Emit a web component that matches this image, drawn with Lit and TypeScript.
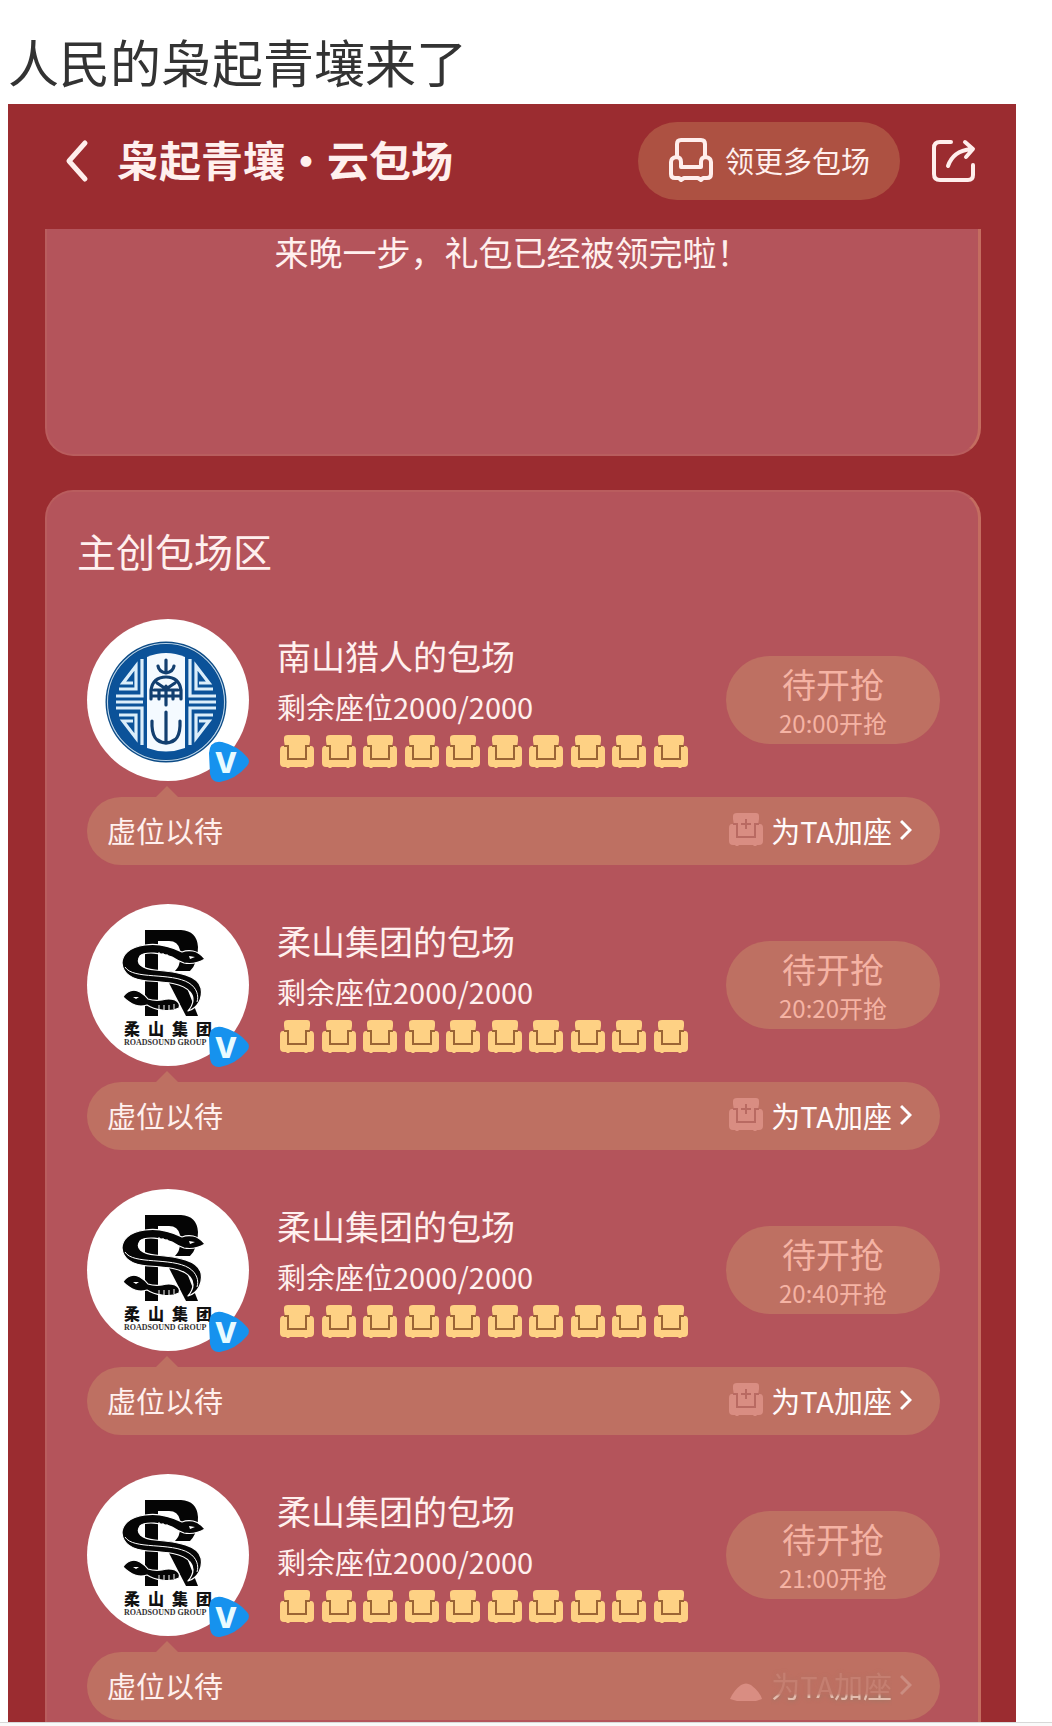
import { LitElement, html, css, svg, nothing } from "lit";
import { customElement, property } from "lit/decorators.js";
import { classMap } from "lit/directives/class-map.js";

interface Booking {
  name: string;
  logo: "nanshan" | "roushan";
  left: number;
  total: number;
  time: string;
  faded?: boolean;
}

const bookings: Booking[] = [
  { name: "南山猎人的包场", logo: "nanshan", left: 2000, total: 2000, time: "20:00" },
  { name: "柔山集团的包场", logo: "roushan", left: 2000, total: 2000, time: "20:20" },
  { name: "柔山集团的包场", logo: "roushan", left: 2000, total: 2000, time: "20:40" },
  { name: "柔山集团的包场", logo: "roushan", left: 2000, total: 2000, time: "21:00", faded: true },
];

const fret = svg`
  <path d="M29 77H55V40" />
  <path d="M32 70H49V47L36 64H46" />
`;

const nanshanLogo = svg`
  <circle cx="79" cy="83" r="60.500" fill="#0c4b86" />
  <circle cx="79" cy="83" r="58.500" fill="none" stroke="#b8d3ea" stroke-width="1.200" />
  <circle cx="79" cy="83" r="57.500" fill="#0b5299" />
  <path d="M60 38Q79 30 98 38V129Q79 136 60 129Z" fill="#f4faff" />
  <g fill="none" stroke="#dceefa" stroke-width="3.200">
    <g>${fret}</g>
    <g transform="translate(158 0) scale(-1 1)">${fret}</g>
    <g transform="translate(0 166) scale(1 -1)">${fret}</g>
    <g transform="translate(158 166) scale(-1 -1)">${fret}</g>
    <path d="M29 83H56M102 83H129" />
  </g>
  <g fill="none" stroke="#123f70" stroke-width="3.200" stroke-linecap="round" stroke-linejoin="round">
    <path d="M79 41V54M71 47Q72 53 79 54Q86 53 87 47" />
    <path d="M64 80V71Q66 58 79 58Q92 58 94 71V80M70 64L79 70L88 64M67 71H91M65 77H93M72 71V80M86 71V80M79 67V86" />
    <path d="M65 102Q64 124 79 124Q94 124 93 102M79 93V124M71 121Q79 127 87 121" />
  </g>
`;

const roushanLogo = svg`
  <path d="M58 26H94Q110 27 111 43Q111 59 103 67H88Q93 62 93 55V46Q91 37 82 37H71V112H58Z" fill="#050505" />
  <path d="M82 79H98L111 112H99Z" fill="#050505" />
  <g fill="#050505" stroke="#fff" stroke-width="1.200" stroke-linejoin="round">
    <path
      d="M36 93Q38 89 43 87Q48 85 53 88Q58 91 61 95Q67 97 75 96Q82 94 88 96Q94 99 92 104Q84 108 75 106Q66 105 60 101Q54 103 48 101Q42 99 36 93Z"
    />
    <path
      d="M118 55Q112 48 106 47Q100 46 95 48C85 43 71 39 58 41C41 43 35 52 35 59C36 71 48 76 61 77C78 78 96 79 103 88C108 94 106 101 101 107C111 104 116 94 114 84C111 71 91 68 68 66C55 65 48 59 53 52C58 47 75 49 85 53Q91 57 97 59Q108 61 118 55Z"
    />
  </g>
  <g fill="none" stroke="#fff" stroke-width="1">
    <path d="M38 63C46 76 84 68 102 79C110 84 112 92 110 98" />
    <path d="M72 48V51M76 49V53M80 50V54M72 101V107M77 101V107M82 101V107M87 100V105" />
  </g>
  <path d="M102 52L108 53L103 55ZM46 93L52 93L49 95Z" fill="#fff" />
  <text class="logo-cn" x="37 61 85 109" y="131">柔山集团</text>
  <text class="logo-en" x="37" y="141">ROADSOUND GROUP</text>
`;

const sofaShape = svg`
  <path d="M8 0H27Q30 0 30 3V6L29 12H25V23H9V12H5L4 6V3Q4 0 8 0Z" />
  <path d="M3 11H5Q8 11 8 14V24H26V14Q26 11 29 11H31Q34 11 34 15V28Q34 32 30 32H28L27 33H25L24 32H10L9 33H7L6 32H4Q0 32 0 28V15Q0 11 3 11Z" />
`;

@customElement("booking-row")
export class BookingRow extends LitElement {
  @property({ attribute: false }) booking!: Booking;

  static styles = css`
    :host {
      display: block;
      color: #fff0ee;
    }
    .top {
      display: flex;
      align-items: center;
    }
    .avatar {
      flex: none;
      width: 162px;
      height: 162px;
      overflow: visible;
    }
    .logo-cn {
      font: 900 16px "Noto Sans CJK SC", sans-serif;
      fill: #111;
    }
    .logo-en {
      font: bold 8px "Liberation Serif", serif;
      fill: #333;
    }
    .badge-v {
      font: 800 29px Inter, sans-serif;
      fill: #e8fbff;
      text-anchor: middle;
    }
    .info {
      flex: 1;
      margin-left: 28px;
    }
    .name {
      margin: 0;
      font-size: 34px;
      line-height: 50px;
      font-weight: 400;
    }
    .left {
      margin: 0;
      font-size: 29px;
      line-height: 50px;
    }
    .seats {
      display: flex;
      justify-content: space-between;
      width: 408px;
      margin: 4px 0 0 3px;
    }
    .sofa {
      display: block;
      flex: none;
      width: 34px;
      height: 34px;
      fill: #fed184;
    }
    .line {
      fill: none;
      stroke: #9b6535;
      stroke-width: 2;
    }
    button {
      font-family: inherit;
      color: inherit;
      border: 0;
      margin: 0;
      padding: 0;
      background: none;
    }
    .status {
      flex: none;
      display: flex;
      flex-direction: column;
      align-items: center;
      justify-content: center;
      box-sizing: border-box;
      width: 214px;
      height: 88px;
      padding-top: 4px;
      border-radius: 44px;
      background: #be7062;
      color: #f5b3a4;
    }
    .state {
      font-size: 34px;
      line-height: 42px;
    }
    .time {
      font-size: 24px;
      line-height: 36px;
    }
    .bubble {
      position: relative;
      box-sizing: border-box;
      display: flex;
      align-items: center;
      justify-content: space-between;
      height: 68px;
      margin-top: 16px;
      padding: 0 28px 2px 20px;
      border-radius: 34px;
      background: #be7062;
      font-size: 29px;
    }
    .bubble::before {
      content: "";
      position: absolute;
      left: 69px;
      bottom: 100%;
      border: 11px solid transparent;
      border-top: 0;
      border-bottom-color: #be7062;
    }
    .add {
      display: flex;
      align-items: center;
      gap: 8px;
      font-size: 29px;
      line-height: 44px;
      color: #fffafa;
    }
    .add .sofa {
      fill: #d98d82;
    }
    .add .line {
      stroke: #b96a62;
    }
    .chevron {
      width: 12px;
      height: 22px;
      fill: none;
      stroke: #fff;
      stroke-width: 3;
    }
    .faded .label {
      -webkit-mask-image: linear-gradient(rgba(0, 0, 0, 0.2) 70%, #000 76%);
      mask-image: linear-gradient(rgba(0, 0, 0, 0.2) 70%, #000 76%);
      color: #e3bcae;
      text-shadow: 0 0 5px #8f7a68;
    }
    .faded .chevron {
      opacity: 0.2;
    }
  `;

  private sofa(plus = false) {
    return html`<svg class="sofa" viewBox="0 0 34 34" aria-hidden="true">
      ${sofaShape}
      <path class="line" d="M4 11H8V24H26V11H30" />
      ${plus ? svg`<path class="line" d="M17 6V16M12 11H22" />` : nothing}
    </svg>`;
  }

  private smudgedSofa() {
    return html`<svg class="sofa" viewBox="0 0 34 34" aria-hidden="true">
      <path d="M1 31Q5 22 12 17Q17 14 22 17Q31 24 33 31L27 33H8Z" />
    </svg>`;
  }

  render() {
    const b = this.booking;
    return html`
      <div class="top">
        <svg class="avatar" viewBox="0 0 162 162" role="img" aria-label=${b.name}>
          <circle cx="81" cy="81" r="81" fill="#fff" />
          ${b.logo === "nanshan" ? nanshanLogo : roushanLogo}
          <path
            d="M122 134Q123 121 135 123Q151 127 160 138Q164 142 160 147Q149 160 133 163Q125 164 123 155Z"
            fill="#1692ee"
          />
          <text class="badge-v" x="139" y="154">V</text>
        </svg>
        <div class="info">
          <h3 class="name">${b.name}</h3>
          <p class="left">剩余座位${b.left}/${b.total}</p>
          <div class="seats">${Array.from({ length: 10 }, () => this.sofa())}</div>
        </div>
        <button class="status" type="button">
          <span class="state">待开抢</span>
          <span class="time">${b.time}开抢</span>
        </button>
      </div>
      <div class="bubble">
        <span>虚位以待</span>
        <button class=${classMap({ add: true, faded: !!b.faded })} type="button">
          ${b.faded ? this.smudgedSofa() : this.sofa(true)}
          <span class="label">为TA加座</span>
          <svg class="chevron" viewBox="0 0 12 22" aria-hidden="true"><path d="M1 2L10 11L1 20" /></svg>
        </button>
      </div>
    `;
  }
}

@customElement("app-root")
export class AppRoot extends LitElement {
  static styles = css`
    :host {
      display: block;
      min-height: 100vh;
      background: #fafafa;
      font-family: "Noto Sans CJK SC", sans-serif;
    }
    .post {
      background: #fff;
      border-bottom: 1px solid #d8d8d8;
    }
    .caption {
      margin: 0;
      padding: 23px 8px 5px;
      font-size: 51px;
      line-height: 76px;
      font-weight: 400;
      color: #333;
    }
    .screen {
      margin: 0 36px 0 8px;
      background: #9b2c30;
      color: #fff0ee;
    }
    .bar {
      display: flex;
      align-items: center;
      height: 90px;
      padding: 12px 40px 23px 55px;
    }
    button {
      font-family: inherit;
      color: inherit;
      border: 0;
      margin: 0;
      padding: 0;
      background: none;
    }
    .icon {
      display: block;
      flex: none;
      fill: none;
      stroke: #ffeeec;
      stroke-linecap: round;
      stroke-linejoin: round;
    }
    .back {
      width: 26px;
      height: 44px;
      stroke-width: 5;
    }
    .title {
      flex: 1;
      margin: 0 0 0 28px;
      padding-bottom: 4px;
      font-size: 42px;
      line-height: 60px;
      font-weight: 700;
    }
    .more {
      box-sizing: border-box;
      display: flex;
      align-items: center;
      gap: 12px;
      height: 78px;
      padding: 0 30px 2px 31px;
      border-radius: 39px;
      background: #ad5142;
      font-size: 29px;
    }
    .seat {
      width: 44px;
      height: 44px;
      stroke-width: 4;
    }
    .share {
      width: 44px;
      height: 44px;
      margin-left: 32px;
      stroke-width: 4;
    }
    .cards {
      padding: 0 35px 0 37px;
    }
    .card {
      box-sizing: border-box;
      background: #b4545b;
      border: 2px solid #b95d5e;
      border-right: 3px solid #c46d60;
    }
    .gift {
      height: 227px;
      border-top: 0;
      border-radius: 0 0 28px 28px;
      text-align: center;
    }
    .notice {
      margin: 0;
      font-size: 34px;
      line-height: 46px;
    }
    .zone {
      margin-top: 34px;
      padding: 29px 38px 2px 40px;
      border-bottom: 0;
      border-radius: 28px 28px 0 0;
    }
    .heading {
      margin: 0 0 40px -10px;
      font-size: 39px;
      line-height: 58px;
      font-weight: 400;
    }
    .rows {
      display: grid;
      gap: 39px;
      margin: 0;
      padding: 0;
      list-style: none;
    }
  `;

  render() {
    return html`
      <article class="post">
        <p class="caption">人民的枭起青壤来了</p>
        <div class="screen">
          <header class="bar">
            <button type="button" aria-label="返回">
              <svg class="icon back" viewBox="0 0 26 44"><path d="M22 4L6 22L22 40" /></svg>
            </button>
            <h1 class="title">枭起青壤・云包场</h1>
            <button class="more" type="button">
              <svg class="icon seat" viewBox="0 0 44 44" aria-hidden="true">
                <path d="M8 19V6Q8 2 12 2H32Q36 2 36 6V19" />
                <path
                  d="M12 29H32V24Q32 19 37 19Q42 20 42 24V36Q42 40 38 40H34L32 42L29 40H15L12 42L10 40H6Q2 40 2 36V24Q2 20 7 19Q12 19 12 24Z"
                />
              </svg>
              领更多包场
            </button>
            <button class="share" type="button" aria-label="分享">
              <svg class="icon" width="44" height="44" viewBox="0 0 44 44">
                <path d="M19 3H8Q2 3 2 9V35Q2 41 8 41H36Q41 41 41 36V26" />
                <path d="M16 27Q21 12 39 10M33 3L41 10L34 18" />
              </svg>
            </button>
          </header>
          <main class="cards">
            <section class="card gift"><p class="notice">来晚一步，礼包已经被领完啦！</p></section>
            <section class="card zone">
              <h2 class="heading">主创包场区</h2>
              <ul class="rows">
                ${bookings.map((b) => html`<li><booking-row .booking=${b}></booking-row></li>`)}
              </ul>
            </section>
          </main>
        </div>
      </article>
    `;
  }
}
